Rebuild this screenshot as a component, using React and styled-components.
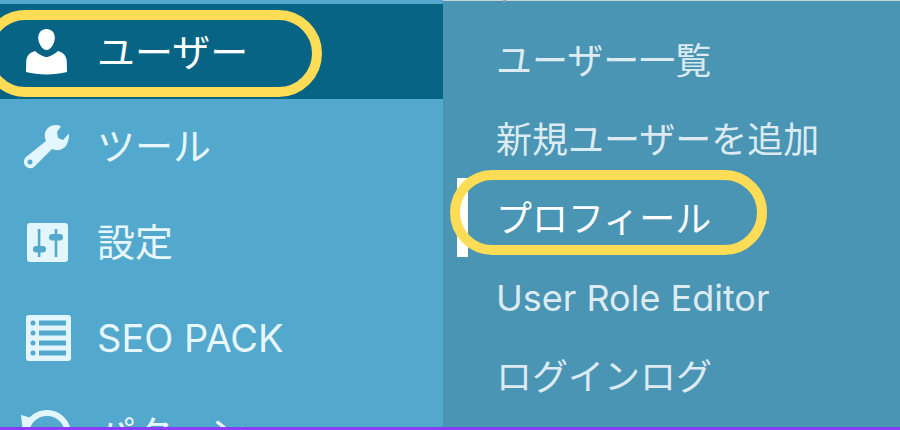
import React from "react";
import styled, { createGlobalStyle } from "styled-components";

const Global = createGlobalStyle`
  html, body { margin: 0; padding: 0; background: #53a9cd; }
  body { font-family: "Inter", "Noto Sans CJK JP", sans-serif; }
`;
const Page = styled.div`
  position: relative;
  width: 900px;
  height: 430px;
  overflow: hidden;
  display: flex;
  flex-direction: column;
`;
const Main = styled.div`
  flex: 1;
  min-height: 0;
  display: flex;
  overflow: hidden;
`;
const Bottom = styled.div`
  height: 3px;
  flex: none;
  background: #8a3dfb;
`;
const Sidebar = styled.nav`
  width: 443px;
  flex: none;
  padding-top: 4px;
  background: #53a9cd;
  box-sizing: border-box;
`;
const Row = styled.div`
  height: ${(p) => (p.$active ? 95 : 96)}px;
  display: flex;
  align-items: center;
  padding-left: 23px;
  padding-bottom: ${(p) => (p.$active ? 0 : 2)}px;
  box-sizing: border-box;
  background: ${(p) => (p.$active ? "#086485" : "transparent")};
  color: ${(p) => (p.$active ? "#ffffff" : "#e8f7fd")};
  font-size: 38px;
  line-height: 1;
`;
const IconSlot = styled.span`
  width: 48px;
  height: 48px;
  flex: none;
  margin-right: 26px;
  padding-left: ${(p) => p.$x}px;
  box-sizing: border-box;
  display: flex;
  align-items: center;
  svg { display: block; flex: none; overflow: visible; }
`;
const Submenu = styled.div`
  position: relative;
  flex: 1;
  background: #4a94b4;
  border-top: 1px solid #c9d3d8;
  box-sizing: border-box;
  padding: 20px 0 0 53px;
  display: flex;
  flex-direction: column;
`;
const TopTick = styled.span`
  position: absolute;
  left: 60px;
  top: -1px;
  width: 3px;
  height: 2px;
  background: #8fa5b0;
`;
const SubItem = styled.div`
  height: 79px;
  display: flex;
  align-items: center;
  font-size: 36px;
  line-height: 1;
  color: ${(p) => (p.$current ? "#ffffff" : "#dcebf2")};
`;
const Oval = styled.div`
  position: absolute;
  box-sizing: border-box;
  border: 10px solid #ffdc55;
  border-radius: 44px;
`;
const UserOval = styled(Oval)`
  left: -18px;
  top: 10px;
  width: 340px;
  height: 87px;
`;
const ProfileOval = styled(Oval)`
  left: 450px;
  top: 170px;
  width: 317px;
  height: 85px;
`;
const CurrentBar = styled.div`
  position: absolute;
  left: 457px;
  top: 178px;
  width: 11px;
  height: 79px;
  background: #ffffff;
`;

const UserIcon = () => (
  <svg width="41" height="46" viewBox="0 0 41 46" fill="#fff">
    <path d="M20.500 0c-5 0-8.300 3.600-8.300 8.800 0 5 3.700 12.200 8.300 12.200s8.300-7.200 8.300-12.200C28.800 3.600 25.500 0 20.500 0z" />
    <path d="M9 22c3 2.600 7 5.500 11.500 6.300C25 27.500 29 24.600 32 22c5.500 1.600 8.500 5 8.800 10.500L41 43c-6 1.600-13.500 2.500-20.500 2.500S6 44.600 0 43l.2-10.500C.5 27 3.500 23.600 9 22z" />
  </svg>
);
const WrenchIcon = () => (
  <svg width="45" height="44" viewBox="0 0 45 44" fill="#e3f6fe">
    <path
      fillRule="evenodd"
      d="M37 2.500C31-1 23 2 21 9c-.6 3 0 6 1 8L2 33c-3 3-2.500 8 .5 10 3 2 6.500 1.500 8.500-1l17-17c4 2 9 1.500 13-2 3-3 4.300-9 4-13.500L39 16l-5-2-1-6 4-5.500zM6 35.500a2.500 2.500 0 1 1 0 5 2.500 2.500 0 0 1 0-5z"
    />
  </svg>
);
const SlidersIcon = () => (
  <svg width="41" height="39" viewBox="0 0 41 39">
    <rect width="41" height="39" rx="3" fill="#e3f6fe" />
    <g fill="#53a9cd">
      <rect x="10.800" y="6" width="2.600" height="28" />
      <rect x="27.700" y="6" width="2.600" height="28" />
      <rect x="6" y="23" width="13" height="6.500" rx="3.200" />
      <rect x="22" y="11" width="14" height="6.500" rx="3.200" />
    </g>
  </svg>
);
const ListIcon = () => (
  <svg width="45" height="46" viewBox="0 0 45 46">
    <rect width="45" height="46" rx="3" fill="#e3f6fe" />
    <g fill="#53a9cd">
      {[8, 18, 28, 38].map((y) => (
        <React.Fragment key={y}>
          <circle cx="7" cy={y} r="2.500" />
          <rect x="13" y={y - 2.500} width="27" height="5" />
        </React.Fragment>
      ))}
    </g>
  </svg>
);
const BackupIcon = () => (
  <svg width="48" height="48" viewBox="0 0 48 48" fill="none">
    <circle cx="24" cy="24" r="21" stroke="#e3f6fe" strokeWidth="6" />
    <path d="M-2 5 L12 9 L0 22z" fill="#e3f6fe" />
  </svg>
);

const menu = [
  { label: "ユーザー", icon: <UserIcon />, x: 3, active: true },
  { label: "ツール", icon: <WrenchIcon />, x: 1 },
  { label: "設定", icon: <SlidersIcon />, x: 4 },
  { label: "SEO PACK", icon: <ListIcon />, x: 3 },
  { label: "パターン", icon: <BackupIcon />, x: 0 },
];
const sub = ["ユーザー一覧", "新規ユーザーを追加", "プロフィール", "User Role Editor", "ログインログ"];

export default function App() {
  return (
    <>
      <Global />
      <Page>
        <Main>
          <Sidebar>
            {menu.map((m) => (
              <Row key={m.label} $active={m.active}>
                <IconSlot $x={m.x}>{m.icon}</IconSlot>
                {m.label}
              </Row>
            ))}
          </Sidebar>
          <Submenu>
            <TopTick />
            {sub.map((s) => (
              <SubItem key={s} $current={s === "プロフィール"}>{s}</SubItem>
            ))}
          </Submenu>
        </Main>
        <Bottom />
        <CurrentBar />
        <UserOval />
        <ProfileOval />
      </Page>
    </>
  );
}
